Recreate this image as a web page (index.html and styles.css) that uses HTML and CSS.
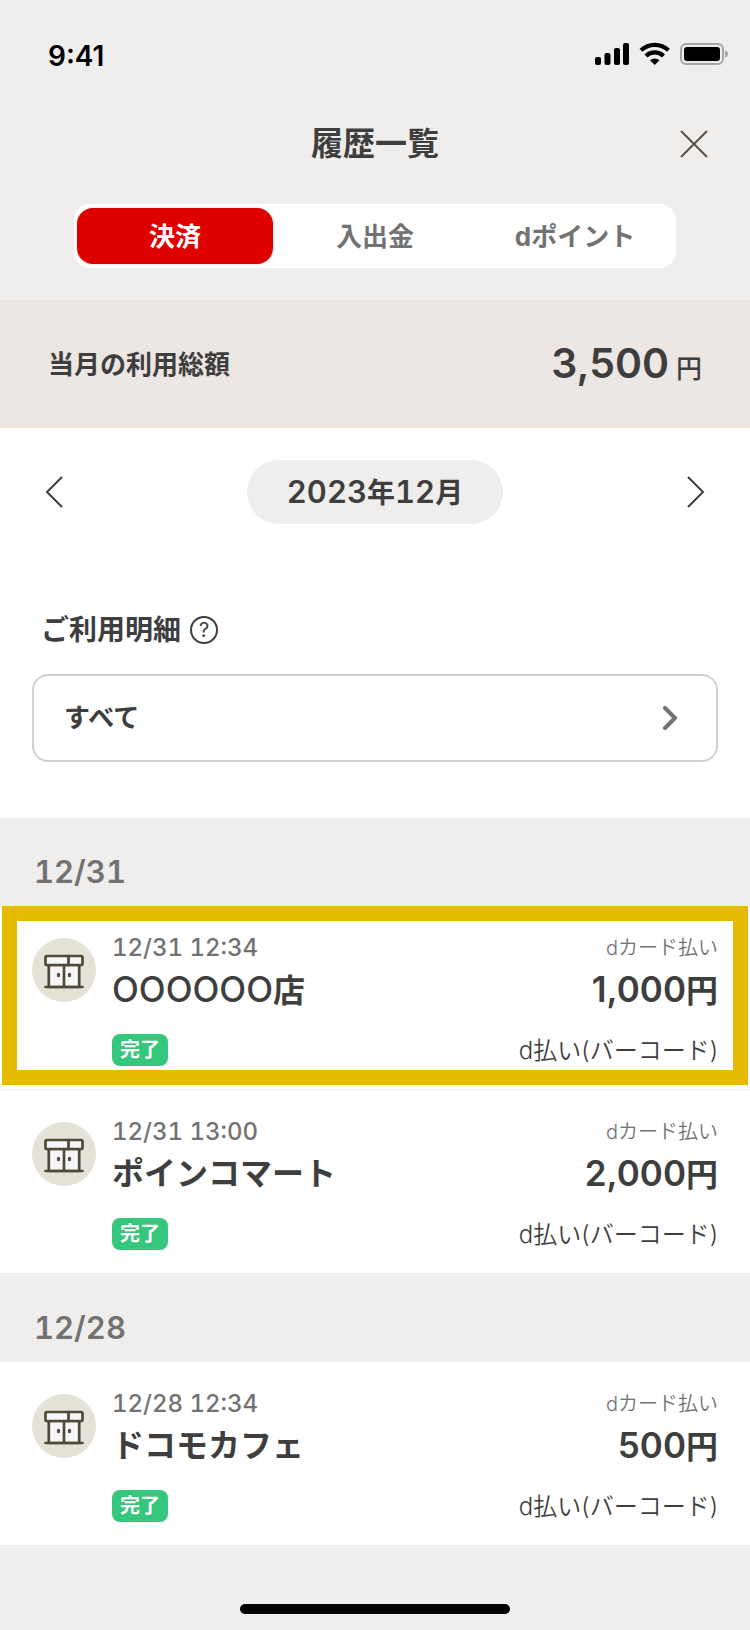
FILE: index.html
```
<!DOCTYPE html>
<html lang="ja">

<head>
  <meta charset="utf-8">
  <meta name="viewport" content="width=device-width, initial-scale=1">
  <title>履歴一覧</title>
  <link rel="stylesheet" href="styles.css">
</head>

<body>
  <!-- store icon, shared by every row -->
  <svg class="defs" width="0" height="0" aria-hidden="true">
    <symbol id="store" viewBox="0 0 64 64">
      <g fill="#f7f7f7" stroke="#50483a" stroke-width="2.700" stroke-linejoin="round" stroke-linecap="round">
        <path d="M16.800 27h30.400v22h-30.400z" />
        <rect x="13.500" y="18" width="37" height="9" rx="1.500" />
        <path d="M36.500 18v9M32 27v22M13.500 49h37" />
      </g>
      <ellipse cx="26.500" cy="37" rx="1.700" ry="2.200" fill="#50483a" />
      <ellipse cx="37.500" cy="37" rx="1.700" ry="2.200" fill="#50483a" />
    </symbol>
  </svg>

  <header>
    <div class="status">
      <span class="time">9:41</span>
      <svg width="134" height="24" viewBox="0 0 134 24" aria-hidden="true">
        <rect x="0" y="15" width="6" height="8" rx="2" />
        <rect x="9.500" y="11" width="6" height="12" rx="2" />
        <rect x="19" y="6" width="6" height="17" rx="2" />
        <rect x="28" y="1" width="6" height="22" rx="2" />
        <g fill="none" stroke="#000" stroke-width="4.200">
          <path d="M46 8.300a20 20 0 0 1 27.500 0" />
          <path d="M51 14a12.500 12.500 0 0 1 17.500 0" />
        </g>
        <path d="M55 18.300a7 7 0 0 1 9.500 0l-4.750 4.700z" />
        <rect x="86" y="2" width="42" height="20" rx="5" fill="none" stroke="#a5a5a4" stroke-width="2" />
        <rect x="89" y="5" width="36" height="14" rx="3" />
        <path d="M130 8.500q3 1 3 3.500t-3 3.500z" fill="#a5a5a4" />
      </svg>
    </div>
    <div class="titlebar">
      <h1>履歴一覧</h1>
      <button class="close" aria-label="閉じる">
        <svg width="28" height="28" viewBox="0 0 28 28"><path d="M1 1l26 26M27 1L1 27" stroke="#5b5140" stroke-width="2" /></svg>
      </button>
    </div>
    <nav class="tabs">
      <button class="tab active">決済</button>
      <button class="tab">入出金</button>
      <button class="tab">dポイント</button>
    </nav>
  </header>

  <main>
    <section class="total">
      <h2>当月の利用総額</h2>
      <p><span class="total-num">3,500</span> 円</p>
    </section>

    <section class="month">
      <button class="arrow" aria-label="前の月">
        <svg width="20" height="32" viewBox="0 0 20 32"><path d="M18 1L3 16l15 15" /></svg>
      </button>
      <div class="month-name"><span>2023</span>年<span>12</span>月</div>
      <button class="arrow" aria-label="次の月">
        <svg width="20" height="32" viewBox="0 0 20 32"><path d="M2 1l15 15L2 31" /></svg>
      </button>
    </section>

    <section class="filter">
      <div class="filter-head">
        <h2>ご利用明細</h2>
        <button class="help" aria-label="ヘルプ">?</button>
      </div>
      <button class="filter-select">
        すべて
        <svg width="16" height="24" viewBox="0 0 16 24"><path d="M3 2l10 10L3 22" /></svg>
      </button>
    </section>

    <section>
      <h3 class="day">12/31</h3>
      <ul>
        <li class="item picked">
          <div class="icon"><svg width="64" height="64"><use href="#store" /></svg></div>
          <div class="detail">
            <div class="line when"><time>12/31 12:34</time><span class="source">dカード払い</span></div>
            <div class="line what"><span class="shop"><span class="latin">OOOOOO</span>店</span><span class="price"><b>1,000</b>円</span></div>
            <div class="line how"><span class="badge">完了</span><span class="method">d払い(バーコード)</span></div>
          </div>
        </li>
        <li class="item">
          <div class="icon"><svg width="64" height="64"><use href="#store" /></svg></div>
          <div class="detail">
            <div class="line when"><time>12/31 13:00</time><span class="source">dカード払い</span></div>
            <div class="line what"><span class="shop">ポインコマート</span><span class="price"><b>2,000</b>円</span></div>
            <div class="line how"><span class="badge">完了</span><span class="method">d払い(バーコード)</span></div>
          </div>
        </li>
      </ul>
    </section>

    <section>
      <h3 class="day">12/28</h3>
      <ul>
        <li class="item">
          <div class="icon"><svg width="64" height="64"><use href="#store" /></svg></div>
          <div class="detail">
            <div class="line when"><time>12/28 12:34</time><span class="source">dカード払い</span></div>
            <div class="line what"><span class="shop">ドコモカフェ</span><span class="price"><b>500</b>円</span></div>
            <div class="line how"><span class="badge">完了</span><span class="method">d払い(バーコード)</span></div>
          </div>
        </li>
      </ul>
    </section>
  </main>

  <footer>
    <div class="home"></div>
  </footer>
</body>

</html>
```
FILE: styles.css
```
* {
  box-sizing: border-box;
  margin: 0;
  padding: 0;
}

body {
  background: #efeeec;
  color: #3e3e3e;
  font-family: Inter, "Noto Sans CJK JP", sans-serif;
  font-size: 26px;
  line-height: 1.3;
}

button {
  border: none;
  background: none;
  color: inherit;
  font: inherit;
}

svg {
  display: block;
}

.defs {
  position: absolute;
}

ul {
  list-style: none;
}

/* header */
header {
  padding-bottom: 32px;
}

.status {
  display: flex;
  justify-content: space-between;
  align-items: center;
  height: 108px;
  padding: 0 21px 0 48px;
}

.time {
  padding-top: 4px;
  color: #000;
  font-size: 28px;
  font-weight: 600;
}

.titlebar {
  display: grid;
  grid-template-columns: 1fr auto 1fr;
  align-items: center;
  height: 72px;
  margin-bottom: 24px;
  padding: 0 42px;
}

h1 {
  grid-column: 2;
  font-size: 32px;
  font-weight: 700;
}

.close {
  justify-self: end;
}

.tabs {
  display: grid;
  grid-template-columns: 1fr 1fr 1fr;
  gap: 4px;
  height: 64px;
  margin: 0 74px;
  padding: 4px 3px;
  background: #fff;
  border-radius: 16px;
}

.tab {
  padding-top: 2px;
  color: #727272;
  font-weight: 700;
  border-radius: 16px;
}

.tab.active {
  background: #df0000;
  color: #fff;
  box-shadow: 0 0 2px #0004;
}

/* monthly total */
.total {
  display: flex;
  justify-content: space-between;
  align-items: center;
  height: 128px;
  padding: 0 48px;
  background: #ece7e3;
}

.total h2 {
  padding-top: 2px;
  font-size: 26px;
  font-weight: 700;
}

.total p {
  font-weight: 500;
}

.total-num {
  font-size: 41px;
  font-weight: 600;
}

.month {
  display: flex;
  justify-content: space-between;
  align-items: center;
  padding: 32px 44px;
  background: #fff;
}

.month-name {
  height: 64px;
  padding: 0 40px;
  background: #efeeec;
  border-radius: 32px;
  font-size: 28px;
  font-weight: 700;
  line-height: 64px;
}

.month-name span {
  font-size: 31px;
  font-weight: 600;
  font-variant-numeric: tabular-nums;
}

.arrow path {
  fill: none;
  stroke: #3e3e3e;
  stroke-width: 2;
}

/* filter */
.filter {
  padding: 50px 32px 56px;
  background: #fff;
}

.filter-head {
  display: flex;
  align-items: center;
  gap: 9px;
  height: 48px;
  margin-bottom: 20px;
  padding-left: 9px;
}

.filter-head h2 {
  font-size: 28px;
  font-weight: 700;
}

.help {
  width: 28px;
  height: 28px;
  border: 2px solid #3e3e3e;
  border-radius: 50%;
  font-size: 20px;
  line-height: 24px;
}

.filter-select {
  display: flex;
  justify-content: space-between;
  align-items: center;
  width: 100%;
  height: 88px;
  padding: 0 38px 0 30px;
  border: 2px solid #d2d2cf;
  border-radius: 16px;
  font-weight: 700;
}

.filter-select path {
  fill: none;
  stroke: #727272;
  stroke-width: 4;
  stroke-linecap: round;
  stroke-linejoin: round;
}

/* history */
.day {
  padding: 30px 34px 10px;
  color: #727272;
  font-size: 31px;
  font-weight: 600;
  font-variant-numeric: tabular-nums;
  line-height: 48px;
}

.item {
  position: relative;
  display: flex;
  gap: 16px;
  padding: 24px 32px 23px;
  background: #fff;
  border-bottom: 1px solid #efeeec;
}

.picked::after {
  content: "";
  position: absolute;
  inset: 0 2px 4px;
  border: 15px solid #e4bb00;
}

.icon {
  width: 64px;
  height: 64px;
  margin-top: 8px;
  background: #e5e3d8;
  border-radius: 50%;
}

.detail {
  flex: 1;
}

.line {
  display: flex;
  justify-content: space-between;
  align-items: center;
}

.when {
  height: 36px;
  color: #727272;
  font-size: 24px;
}

.when time {
  font-weight: 500;
  font-variant-numeric: tabular-nums;
}

.source {
  font-size: 20px;
  font-weight: 350;
}

.what {
  height: 48px;
  margin-bottom: 20px;
  font-size: 32px;
  font-weight: 700;
}

.latin {
  font-size: 35px;
  font-weight: 500;
}

.price b {
  font-size: 35px;
  font-weight: 600;
}

.how {
  height: 32px;
  font-size: 24px;
}

.method {
  padding-top: 2px;
  font-weight: 350;
}

.badge {
  padding: 0 8px;
  background: #35c77c;
  border-radius: 8px;
  color: #fff;
  font-size: 20px;
  font-weight: 700;
  line-height: 32px;
}

footer {
  padding: 58px 0 16px;
}

.home {
  width: 36%;
  height: 10px;
  margin: 0 auto;
  background: #000;
  border-radius: 5px;
}
```
